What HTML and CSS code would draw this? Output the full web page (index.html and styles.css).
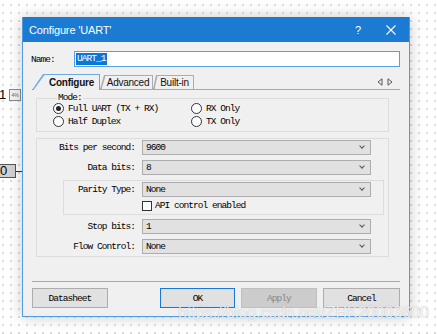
FILE: index.html
```html
<!DOCTYPE html>
<html>
<head>
    <meta charset="UTF-8">
    <meta name="viewport" content="width=device-width, initial-scale=1.0">
    <title>Configure 'UART'</title>
    <link rel="stylesheet" href="styles.css">
</head>
<body>
    <div class="canvas">
        <!-- Schematic-Reste hinter dem Dialog -->
        <div class="pin pin-one"><span class="pin-num">1</span><span class="pin-tag">4%</span></div>
        <div class="pin pin-zero"><span class="pin-box">0</span><span class="pin-wire"></span></div>

        <div class="dialog">
            <div class="titlebar">
                <span class="title">Configure 'UART'</span>
                <span class="help">?</span>
                <svg class="close" width="10" height="10" viewBox="0 0 10 10">
                    <path d="M0.5 0.5L9.5 9.5M9.5 0.5L0.5 9.5" stroke="#fff" stroke-width="1.1" fill="none"/>
                </svg>
            </div>

            <div class="body">
                <div class="name-row">
                    <span class="name-label">Name:</span>
                    <div class="name-input"><span class="selected">UART_1</span></div>
                </div>

                <div class="tabs">
                    <div class="tab active">Configure</div>
                    <div class="tab advanced">Advanced</div>
                    <div class="tab builtin">Built-in</div>
                    <div class="tab-arrows">
                        <svg width="6" height="8" viewBox="0 0 6 8"><path d="M5 0.8L1 4L5 7.2Z" fill="none" stroke="#555" stroke-width="1"/></svg>
                        <svg width="6" height="8" viewBox="0 0 6 8"><path d="M1 0.8L5 4L1 7.2Z" fill="none" stroke="#555" stroke-width="1"/></svg>
                    </div>
                </div>

                <div class="pane">
                    <fieldset class="group mode">
                        <legend>Mode:</legend>
                        <div class="radios">
                            <div class="radio-item"><span class="radio checked"></span>Full UART (TX + RX)</div>
                            <div class="radio-item"><span class="radio"></span>RX Only</div>
                            <div class="radio-item"><span class="radio"></span>Half Duplex</div>
                            <div class="radio-item"><span class="radio"></span>TX Only</div>
                        </div>
                    </fieldset>

                    <div class="group settings">
                        <div class="row">
                            <span class="label">Bits per second:</span>
                            <div class="select">9600<span class="chev"></span></div>
                        </div>
                        <div class="row">
                            <span class="label">Data bits:</span>
                            <div class="select">8<span class="chev"></span></div>
                        </div>

                        <div class="parity">
                            <div class="row">
                                <span class="label short">Parity Type:</span>
                                <div class="select">None<span class="chev"></span></div>
                            </div>
                            <div class="check-row">
                                <span class="checkbox"></span>API control enabled
                            </div>
                        </div>

                        <div class="row">
                            <span class="label">Stop bits:</span>
                            <div class="select">1<span class="chev"></span></div>
                        </div>
                        <div class="row">
                            <span class="label">Flow Control:</span>
                            <div class="select">None<span class="chev"></span></div>
                        </div>
                    </div>
                </div>

                <div class="separator"></div>

                <div class="buttons">
                    <button class="btn datasheet">Datasheet</button>
                    <div class="btn-group">
                        <button class="btn ok">OK</button>
                        <button class="btn apply" disabled>Apply</button>
                        <button class="btn cancel">Cancel</button>
                    </div>
                </div>
            </div>
        </div>

        <div class="watermark">https://blog.csdn.net/ZHK20003600</div>
    </div>
</body>
</html>
```

FILE: styles.css
```css
body {
    margin: 0;
    background: #fff;
}
.canvas {
    position: relative;
    width: 437px;
    height: 334px;
    overflow: hidden;
    background-color: #fff;
    background-image: radial-gradient(circle, #cfcfcf 0.6px, transparent 1px);
    background-size: 8px 8px;
    background-position: -1px 1px;
    font-family: "Liberation Mono", monospace;
    font-size: 9.5px;
    letter-spacing: -0.95px;
    color: #000;
}

/* Schematic pins */
.pin {
    position: absolute;
    display: flex;
    align-items: center;
}
.pin-one {
    left: -1px;
    top: 87px;
}
.pin-num {
    font-family: "Liberation Sans", sans-serif;
    font-size: 13px;
    letter-spacing: 0;
    width: 10px;
}
.pin-tag {
    width: 10px;
    height: 10px;
    border: 1px solid #8a8a8a;
    background: #f4f4f4;
    font-family: "Liberation Sans", sans-serif;
    font-size: 5px;
    letter-spacing: 0;
    color: #666;
    display: flex;
    align-items: center;
    justify-content: center;
}
.pin-zero {
    left: -3px;
    top: 164px;
}
.pin-box {
    width: 19px;
    height: 14px;
    box-sizing: border-box;
    border: 1px solid #555;
    background: #d2d2d2;
    font-family: "Liberation Sans", sans-serif;
    font-size: 13px;
    letter-spacing: 0;
    line-height: 12px;
    padding-left: 2px;
}
.pin-wire {
    width: 6px;
    height: 1px;
    background: #333;
}

/* Dialog */
.dialog {
    position: absolute;
    left: 22px;
    top: 17px;
    width: 388px;
    height: 300px;
    box-sizing: border-box;
    border: 1px solid #4f9ae0;
    border-top: none;
    background: #f0f0f0;
    box-shadow: 0 0 14px rgba(0,0,0,0.22);
    overflow: hidden;
}
.titlebar {
    height: 25px;
    background: #1b7bd3;
    color: #fff;
    display: flex;
    align-items: center;
    padding: 0 13px 0 6px;
    font-family: "Liberation Sans", sans-serif;
    font-size: 11px;
    letter-spacing: -0.15px;
}
.title {
    flex: 1;
}
.help {
    font-size: 11px;
    margin-right: 25px;
}
.body {
    padding: 9px 9px 0 9px;
}
.name-row {
    display: flex;
    align-items: center;
    height: 16px;
}
.name-label {
    width: 43px;
    margin-left: -1px;
}
.name-input {
    flex: 1;
    height: 16px;
    box-sizing: border-box;
    border: 1px solid #5a9ee2;
    background: #fff;
    display: flex;
    align-items: center;
    padding-left: 1px;
}
.selected {
    background: #0a78d7;
    color: #fff;
    padding: 0 1px;
    line-height: 12px;
}

/* Tabs */
.tabs {
    margin-top: 7px;
    height: 15px;
    display: flex;
    align-items: flex-end;
    border-bottom: 1px solid #7db2e8;
    padding-right: 7px;
    font-family: "Liberation Sans", sans-serif;
    font-size: 10px;
    letter-spacing: -0.25px;
}
.tab {
    position: relative;
    z-index: 0;
    height: 14px;
    display: flex;
    align-items: center;
    justify-content: center;
    box-sizing: border-box;
    color: #111;
}
.tab::before,
.tab::after {
    content: '';
    position: absolute;
    z-index: -1;
    clip-path: polygon(0 100%, var(--slant) 0, 100% 0, 100% 100%);
}
.tab::before {
    inset: 0;
    background: #adadad;
}
.tab::after {
    top: 1px;
    right: 1px;
    bottom: 0;
    left: 1.5px;
    background: #f0f0f0;
}
.tab.active {
    --slant: 11px;
    width: 68px;
    height: 16px;
    margin-bottom: -1px;
    padding-left: 11px;
    font-weight: bold;
    z-index: 1;
}
.tab.active::before {
    background: #6ea9e4;
}
.tab.advanced {
    --slant: 4px;
    width: 53px;
    padding-left: 3px;
}
.tab.builtin {
    --slant: 3px;
    width: 41px;
    padding-left: 2px;
}
.tab-arrows {
    margin-left: auto;
    display: flex;
    gap: 4px;
    align-self: center;
}

/* Pane */
.pane {
    padding: 4px 11px 0 4px;
}
.group {
    border: 1px solid #dcdcdc;
    margin: 0;
}
fieldset.mode {
    padding: 0 0 3px 16px;
    margin-top: -1px;
}
.mode legend {
    padding: 0 1px;
    margin-left: 4px;
    line-height: 10px;
}
.radios {
    display: grid;
    grid-template-columns: 138px 1fr;
    grid-auto-rows: 13px;
    margin-top: -1px;
}
.radio-item {
    display: flex;
    align-items: center;
}
.radio {
    width: 11px;
    height: 11px;
    box-sizing: border-box;
    border: 1px solid #333;
    border-radius: 50%;
    background: #fff;
    margin-right: 4px;
    display: flex;
    align-items: center;
    justify-content: center;
}
.radio.checked::after {
    content: '';
    width: 5px;
    height: 5px;
    border-radius: 50%;
    background: #222;
}

.settings {
    margin-top: 6px;
    padding: 1px 0 2px 0;
}
.row {
    display: flex;
    align-items: center;
    height: 15px;
    margin-bottom: 5px;
}
.settings > .row:last-child {
    margin-bottom: 0;
}
.label {
    width: 98px;
    text-align: right;
    margin-right: 7px;
    flex-shrink: 0;
}
.label.short {
    width: 71px;
}
.select {
    position: relative;
    width: 229px;
    height: 15px;
    box-sizing: border-box;
    border: 1px solid #adadad;
    background: #e1e1e1;
    padding-left: 3px;
    display: flex;
    align-items: center;
}
.chev {
    position: absolute;
    right: 6px;
    top: 3px;
    width: 3px;
    height: 3px;
    border-right: 1px solid #555;
    border-bottom: 1px solid #555;
    transform: rotate(45deg);
}
.parity {
    margin: 1px 4px 4px 26px;
    border: 1px solid #dcdcdc;
    padding: 1px 0 3px 0;
}
.parity .row {
    margin-bottom: 3px;
}
.check-row {
    display: flex;
    align-items: center;
    height: 11px;
    padding-left: 78px;
}
.checkbox {
    width: 10px;
    height: 10px;
    box-sizing: border-box;
    border: 1px solid #333;
    background: #fff;
    margin-right: 3px;
}

/* Bottom */
.separator {
    margin-top: 24px;
    height: 1px;
    background: #a9a9a9;
}
.buttons {
    margin-top: 6px;
    display: flex;
    align-items: center;
}
.btn-group {
    margin-left: auto;
    display: flex;
    gap: 6px;
}
.btn {
    height: 20px;
    box-sizing: border-box;
    border: 1px solid #adadad;
    background: #e1e1e1;
    font-family: "Liberation Mono", monospace;
    font-size: 9.5px;
    letter-spacing: -0.95px;
    color: #000;
    padding: 0;
}
.datasheet {
    width: 76px;
}
.ok {
    width: 75px;
    border-color: #1a78d4;
    box-shadow: inset 0 0 0 1px #cde2f6;
}
.apply {
    width: 76px;
    background: #cccccc;
    border-color: #bfbfbf;
    color: #888;
}
.cancel {
    width: 77px;
}

.watermark {
    position: absolute;
    left: 178px;
    top: 304px;
    font-family: "Liberation Sans", sans-serif;
    font-size: 16px;
    letter-spacing: 0;
    color: rgba(255,255,255,0.85);
    text-shadow: 0 0 1px rgba(0,0,0,0.3);
    white-space: nowrap;
}
```
